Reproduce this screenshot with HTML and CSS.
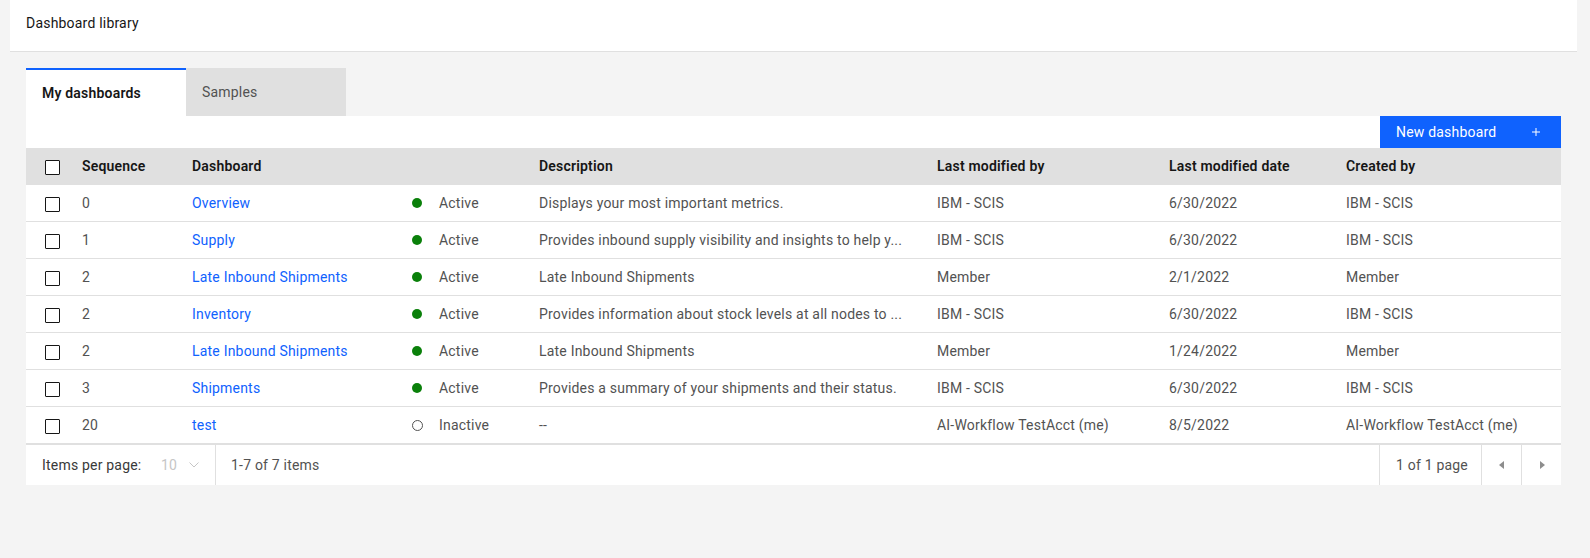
FILE: index.html
```html
<!DOCTYPE html>
<html lang="en">
<head>
<meta charset="utf-8">
<title>Dashboard library</title>
<link rel="stylesheet" href="styles.css">
</head>
<body>
<div class="app">
  <header class="page-header">
    <h1 class="page-title">Dashboard library</h1>
  </header>
  <main class="content">
    <div class="tabs">
      <button class="tab tab-active">My dashboards</button>
      <button class="tab">Samples</button>
    </div>
    <div class="table-card">
      <div class="toolbar">
        <button class="btn-primary">
          <span>New dashboard</span>
          <svg class="btn-icon" width="16" height="16" viewBox="0 0 32 32" aria-hidden="true"><path d="M17 15V8h-2v7H8v2h7v7h2v-7h7v-2z" fill="#fff"/></svg>
        </button>
      </div>
      <table class="data-table">
        <colgroup>
          <col class="c-check"><col class="c-seq"><col class="c-dash"><col class="c-status"><col class="c-desc"><col class="c-modby"><col class="c-moddate"><col class="c-created">
        </colgroup>
        <thead>
          <tr>
            <th class="cell-check"><span class="checkbox"></span></th>
            <th>Sequence</th>
            <th>Dashboard</th>
            <th></th>
            <th>Description</th>
            <th>Last modified by</th>
            <th>Last modified date</th>
            <th>Created by</th>
          </tr>
        </thead>
        <tbody>
          <tr>
            <td class="cell-check"><span class="checkbox"></span></td>
            <td>0</td>
            <td><a class="link" href="#">Overview</a></td>
            <td><span class="dot dot-active"></span>Active</td>
            <td>Displays your most important metrics.</td>
            <td>IBM - SCIS</td>
            <td>6/30/2022</td>
            <td>IBM - SCIS</td>
          </tr>
          <tr>
            <td class="cell-check"><span class="checkbox"></span></td>
            <td>1</td>
            <td><a class="link" href="#">Supply</a></td>
            <td><span class="dot dot-active"></span>Active</td>
            <td>Provides inbound supply visibility and insights to help y...</td>
            <td>IBM - SCIS</td>
            <td>6/30/2022</td>
            <td>IBM - SCIS</td>
          </tr>
          <tr>
            <td class="cell-check"><span class="checkbox"></span></td>
            <td>2</td>
            <td><a class="link" href="#">Late Inbound Shipments</a></td>
            <td><span class="dot dot-active"></span>Active</td>
            <td>Late Inbound Shipments</td>
            <td>Member</td>
            <td>2/1/2022</td>
            <td>Member</td>
          </tr>
          <tr>
            <td class="cell-check"><span class="checkbox"></span></td>
            <td>2</td>
            <td><a class="link" href="#">Inventory</a></td>
            <td><span class="dot dot-active"></span>Active</td>
            <td>Provides information about stock levels at all nodes to ...</td>
            <td>IBM - SCIS</td>
            <td>6/30/2022</td>
            <td>IBM - SCIS</td>
          </tr>
          <tr>
            <td class="cell-check"><span class="checkbox"></span></td>
            <td>2</td>
            <td><a class="link" href="#">Late Inbound Shipments</a></td>
            <td><span class="dot dot-active"></span>Active</td>
            <td>Late Inbound Shipments</td>
            <td>Member</td>
            <td>1/24/2022</td>
            <td>Member</td>
          </tr>
          <tr>
            <td class="cell-check"><span class="checkbox"></span></td>
            <td>3</td>
            <td><a class="link" href="#">Shipments</a></td>
            <td><span class="dot dot-active"></span>Active</td>
            <td>Provides a summary of your shipments and their status.</td>
            <td>IBM - SCIS</td>
            <td>6/30/2022</td>
            <td>IBM - SCIS</td>
          </tr>
          <tr>
            <td class="cell-check"><span class="checkbox"></span></td>
            <td>20</td>
            <td><a class="link" href="#">test</a></td>
            <td><span class="dot dot-inactive"></span>Inactive</td>
            <td>--</td>
            <td>AI-Workflow TestAcct (me)</td>
            <td>8/5/2022</td>
            <td>AI-Workflow TestAcct (me)</td>
          </tr>
        </tbody>
      </table>
      <div class="pagination">
        <div class="pagination-left">
          <div class="per-page">
            <span class="per-page-label">Items per page:</span>
            <span class="per-page-value">10</span>
            <svg class="chevron" width="10" height="6" viewBox="0 0 10 6" aria-hidden="true"><path d="M0.5 0.5L5 5l4.5-4.5" fill="none" stroke="#c6c6c6" stroke-width="1"/></svg>
          </div>
          <span class="range">1-7 of 7 items</span>
        </div>
        <div class="pagination-right">
          <span class="page-info">1 of 1 page</span>
          <button class="page-btn" aria-label="Previous page"><svg width="16" height="16" viewBox="0 0 32 32" aria-hidden="true"><path d="M20 24l-10-8 10-8z" fill="#8d8d8d"/></svg></button>
          <button class="page-btn" aria-label="Next page"><svg width="16" height="16" viewBox="0 0 32 32" aria-hidden="true"><path d="M12 8l10 8-10 8z" fill="#8d8d8d"/></svg></button>
        </div>
      </div>
    </div>
  </main>
</div>
</body>
</html>
```

FILE: styles.css
```css
* {
  box-sizing: border-box;
}

html,
body {
  margin: 0;
  padding: 0;
}

body {
  background: #f4f4f4;
  font-family: Roboto, "Liberation Sans", Arial, sans-serif;
  font-size: 14px;
  line-height: 18px;
  letter-spacing: 0.2px;
  color: #161616;
}

.app {
  margin-left: 10px;
  width: 1567px;
}

.page-header {
  background: #fff;
  height: 52px;
  border-bottom: 1px solid #e0e0e0;
  padding: 14px 16px 0;
}

.page-title {
  margin: 0;
  font-size: 14px;
  font-weight: 400;
  line-height: 18px;
  color: #161616;
}

.content {
  padding: 16px;
}

.tabs {
  display: flex;
}

.tab {
  width: 160px;
  height: 48px;
  border: 0;
  padding: 0 16px;
  text-align: left;
  font: inherit;
  letter-spacing: inherit;
  background: #e0e0e0;
  color: #525252;
}

.tab-active {
  background: #fff;
  color: #161616;
  font-weight: 600;
  border-top: 2px solid #0f62fe;
}

.table-card {
  background: #fff;
  width: 1535px;
}

.toolbar {
  display: flex;
  justify-content: flex-end;
  height: 32px;
}

.btn-primary {
  width: 181px;
  height: 32px;
  border: 0;
  background: #0f62fe;
  color: #fff;
  font: inherit;
  letter-spacing: inherit;
  display: flex;
  align-items: center;
  justify-content: space-between;
  padding: 0 17px 0 16px;
}

.btn-icon {
  display: block;
}

.data-table {
  width: 100%;
  border-collapse: separate;
  border-spacing: 0;
  table-layout: fixed;
}

.c-check { width: 40px; }
.c-seq { width: 110px; }
.c-dash { width: 220px; }
.c-status { width: 127px; }
.c-desc { width: 398px; }
.c-modby { width: 232px; }
.c-moddate { width: 177px; }
.c-created { width: 231px; }

.data-table th {
  background: #e0e0e0;
  padding: 9px 16px 10px;
  text-align: left;
  font-weight: 600;
  color: #161616;
  white-space: nowrap;
}

.data-table td {
  padding: 9px 16px;
  border-bottom: 1px solid #e0e0e0;
  color: #525252;
  white-space: nowrap;
  overflow: hidden;
}

.data-table .cell-check {
  padding-left: 19px;
  padding-right: 0;
}

.checkbox {
  display: block;
  width: 15px;
  height: 15px;
  margin-top: 2px;
  border: 1px solid #161616;
  border-radius: 1px;
  background: #fff;
}

.link {
  color: #0f62fe;
  text-decoration: none;
}

.dot {
  display: inline-block;
  width: 10px;
  height: 10px;
  border-radius: 50%;
  margin-right: 17px;
  vertical-align: 0;
}

.dot-active {
  background: #0a800a;
}

.dot-inactive {
  width: 11px;
  height: 11px;
  border: 1.3px solid #525252;
  margin-right: 16px;
  vertical-align: -0.5px;
}

.pagination {
  display: flex;
  justify-content: space-between;
  height: 41px;
  border-top: 1px solid #e0e0e0;
  background: #fff;
}

.pagination-left {
  display: flex;
  align-items: center;
}

.per-page {
  display: flex;
  align-items: center;
  width: 190px;
  height: 100%;
  border-right: 1px solid #e0e0e0;
  padding-left: 16px;
}

.per-page-label {
  width: 119px;
  color: #393939;
}

.per-page-value {
  width: 28px;
  color: #c6c6c6;
}

.chevron {
  display: block;
}

.range {
  padding-left: 15px;
  color: #525252;
}

.pagination-right {
  display: flex;
}

.page-info {
  display: flex;
  align-items: center;
  width: 102px;
  border-left: 1px solid #e0e0e0;
  padding-left: 16px;
  color: #525252;
}

.page-btn {
  width: 40px;
  height: 40px;
  border: 0;
  border-left: 1px solid #e0e0e0;
  background: #fff;
  padding: 0;
  display: flex;
  align-items: center;
  justify-content: center;
}
```
